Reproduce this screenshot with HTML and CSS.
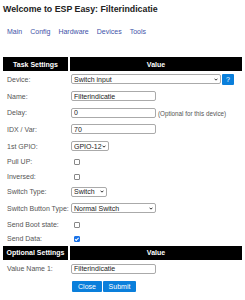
FILE: index.html
```html
<!DOCTYPE html>
<html lang="en">
  <head>
    <meta charset="UTF-8" />
    <meta name="viewport" content="width=device-width, initial-scale=1.0" />
    <title>Welcome to ESP Easy: Filterindicatie</title>
    <link rel="stylesheet" href="styles.css">
  </head>
  <body>
    <h1>Welcome to ESP Easy: Filterindicatie</h1>

    <div class="menu">
      <a href="#">Main</a>
      <a href="#">Config</a>
      <a href="#">Hardware</a>
      <a href="#">Devices</a>
      <a href="#">Tools</a>
    </div>

    <form>
      <table class="settings">
        <tr>
          <th class="col-label">Task Settings</th>
          <th>Value</th>
        </tr>
        <tr class="inp">
          <td>Device:</td>
          <td class="device">
            <span class="select wide">
              <select><option>Switch input</option></select>
              <svg class="caret" viewBox="0 0 6 4"><path d="M0.8 0.8 L3 3 L5.2 0.8" /></svg>
            </span>
            <a class="button help" href="#">?</a>
          </td>
        </tr>
        <tr class="inp">
          <td>Name:</td>
          <td><input type="text" class="mid" value="Filterindicatie" /></td>
        </tr>
        <tr class="inp">
          <td>Delay:</td>
          <td><input type="text" class="mid" value="0" /> <span class="note">(Optional for this device)</span></td>
        </tr>
        <tr class="inp">
          <td>IDX / Var:</td>
          <td><input type="text" class="mid" value="70" /></td>
        </tr>
        <tr class="inp">
          <td>1st GPIO:</td>
          <td>
            <span class="select gpio">
              <select><option>GPIO-12</option></select>
              <svg class="caret" viewBox="0 0 6 4"><path d="M0.8 0.8 L3 3 L5.2 0.8" /></svg>
            </span>
          </td>
        </tr>
        <tr class="chk">
          <td>Pull UP:</td>
          <td><input type="checkbox" /></td>
        </tr>
        <tr class="chk">
          <td>Inversed:</td>
          <td><input type="checkbox" /></td>
        </tr>
        <tr class="inp">
          <td>Switch Type:</td>
          <td>
            <span class="select small">
              <select><option>Switch</option></select>
              <svg class="caret" viewBox="0 0 6 4"><path d="M0.8 0.8 L3 3 L5.2 0.8" /></svg>
            </span>
          </td>
        </tr>
        <tr class="inp">
          <td>Switch Button Type:</td>
          <td>
            <span class="select mid">
              <select><option>Normal Switch</option></select>
              <svg class="caret" viewBox="0 0 6 4"><path d="M0.8 0.8 L3 3 L5.2 0.8" /></svg>
            </span>
          </td>
        </tr>
        <tr class="chk">
          <td>Send Boot state:</td>
          <td><input type="checkbox" /></td>
        </tr>
        <tr class="chk">
          <td>Send Data:</td>
          <td><input type="checkbox" checked /></td>
        </tr>
        <tr>
          <th class="col-label">Optional Settings</th>
          <th>Value</th>
        </tr>
        <tr class="inp last">
          <td>Value Name 1:</td>
          <td><input type="text" class="mid" value="Filterindicatie" /></td>
        </tr>
        <tr>
          <td></td>
          <td class="actions">
            <a class="button" href="#">Close</a><a class="button" href="#">Submit</a>
          </td>
        </tr>
      </table>
    </form>
  </body>
</html>
```

FILE: styles.css
```css
body {
  font-family: "Liberation Sans", Arial, sans-serif;
  font-size: 7px;
  color: #555;
  margin: 0;
  padding: 0 3px;
  background-color: #fff;
}
h1 {
  font-size: 8.8px;
  font-weight: bold;
  color: #222;
  margin: 4px 0 0 0;
}
.menu {
  margin: 14px 0 0 4px;
  display: flex;
  gap: 8px;
}
.menu a {
  color: #4152a8;
  text-decoration: none;
  font-size: 7px;
}
.settings {
  width: 239px;
  margin-top: 22px;
  border-collapse: collapse;
}
.settings th {
  background-color: #000;
  color: #fff;
  font-weight: bold;
  font-size: 7px;
  height: 14px;
  padding: 0;
}
.settings th.col-label {
  width: 65px;
  border-right: 2px solid #fff;
}
.settings td {
  padding: 0 0 0 4px;
  white-space: nowrap;
}
.settings td + td {
  padding-left: 2px;
}
.inp td {
  height: 16.7px;
}
.chk td {
  height: 14.5px;
}
.last td {
  height: 18px;
}
input[type="text"],
select {
  font-family: "Liberation Sans", Arial, sans-serif;
  font-size: 7px;
  color: #222;
  height: 10px;
  box-sizing: border-box;
  border: 1px solid #aaa;
  border-radius: 2px;
  padding: 0 2px;
  margin: 0;
  vertical-align: middle;
  background-color: #fff;
}
.select {
  display: inline-block;
  position: relative;
  height: 10px;
  vertical-align: middle;
}
.select select {
  appearance: none;
  -webkit-appearance: none;
  width: 100%;
  padding: 0 6px 0 2px;
  vertical-align: top;
}
.caret {
  position: absolute;
  right: 3px;
  top: 3.5px;
  width: 4px;
  height: 3px;
  fill: none;
  stroke: #222;
  stroke-width: 1.4;
}
.wide {
  width: 150px;
}
.mid {
  width: 85px;
}
.gpio {
  width: 38px;
}
.small {
  width: 36px;
}
.note {
  color: #555;
  font-size: 6.3px;
  vertical-align: middle;
}
input[type="checkbox"] {
  appearance: none;
  -webkit-appearance: none;
  box-sizing: border-box;
  width: 6px;
  height: 6px;
  margin: 0 0 0 3px;
  border: 1px solid #888;
  border-radius: 1px;
  background-color: #fff;
  vertical-align: middle;
  position: relative;
}
input[type="checkbox"]:checked {
  background-color: #1a73e8;
  border-color: #1a73e8;
}
input[type="checkbox"]:checked::after {
  content: "";
  position: absolute;
  left: 1px;
  top: -0.5px;
  width: 1.3px;
  height: 2.6px;
  border: solid #fff;
  border-width: 0 0.8px 0.8px 0;
  transform: rotate(45deg);
}
.device {
  display: flex;
  align-items: center;
  gap: 1px;
  height: 16.7px;
}
.button {
  display: inline-block;
  background-color: #0a7fdb;
  color: #fff;
  text-decoration: none;
  font-size: 7px;
  line-height: 11px;
  height: 11px;
  padding: 0 5px;
  border-radius: 1px;
  text-align: center;
}
.help {
  width: 12px;
  padding: 0;
}
.actions {
  height: 17px;
  padding-left: 3px !important;
}
.actions .button {
  width: 30px;
  padding: 0;
}
.actions .button + .button {
  width: 33px;
  margin-left: 1px;
}
```
